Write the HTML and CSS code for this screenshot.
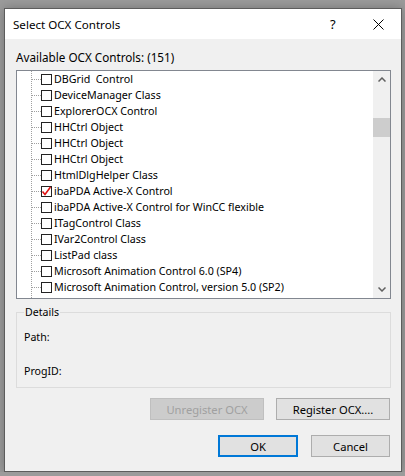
FILE: index.html
```html
<!DOCTYPE html>
<html lang="en">

<head>
  <meta charset="UTF-8">
  <title>Select OCX Controls</title>
  <link rel="stylesheet" href="styles.css">
</head>

<body>
  <div class="dialog">
    <div class="titlebar">
      <span class="title">Select OCX Controls</span>
      <span class="help">?</span>
      <span class="close">
        <svg width="11" height="11" viewBox="0 0 11 11">
          <path d="M0.5 0.5 L10.5 10.5 M10.5 0.5 L0.5 10.5" stroke="#000" stroke-width="1" fill="none" />
        </svg>
      </span>
    </div>

    <div class="content">
      <div class="caption">Available OCX Controls: (151)</div>

      <div class="listbox">
        <ul class="tree">
          <li><span class="branch"></span><span class="check"></span>DBGrid&nbsp; Control</li>
          <li><span class="branch"></span><span class="check"></span>DeviceManager Class</li>
          <li><span class="branch"></span><span class="check"></span>ExplorerOCX Control</li>
          <li><span class="branch"></span><span class="check"></span>HHCtrl Object</li>
          <li><span class="branch"></span><span class="check"></span>HHCtrl Object</li>
          <li><span class="branch"></span><span class="check"></span>HHCtrl Object</li>
          <li><span class="branch"></span><span class="check"></span>HtmlDlgHelper Class</li>
          <li><span class="branch"></span><span class="check checked">
              <svg width="11" height="11" viewBox="0 0 11 11">
                <path d="M1.5 5.5 L4 8.5 L9.5 1" stroke="#e01010" stroke-width="1.6" fill="none" />
              </svg></span>ibaPDA Active-X Control</li>
          <li><span class="branch"></span><span class="check"></span>ibaPDA Active-X Control for WinCC flexible</li>
          <li><span class="branch"></span><span class="check"></span>ITagControl Class</li>
          <li><span class="branch"></span><span class="check"></span>IVar2Control Class</li>
          <li><span class="branch"></span><span class="check"></span>ListPad class</li>
          <li><span class="branch"></span><span class="check"></span>Microsoft Animation Control 6.0 (SP4)</li>
          <li><span class="branch"></span><span class="check"></span>Microsoft Animation Control, version 5.0 (SP2)</li>
        </ul>

        <div class="scrollbar">
          <div class="arrow">
            <svg width="8" height="5" viewBox="0 0 8 5">
              <path d="M0.5 4.5 L4 1 L7.5 4.5" stroke="#606060" stroke-width="1.5" fill="none" />
            </svg>
          </div>
          <div class="track"><div class="thumb"></div></div>
          <div class="arrow">
            <svg width="8" height="5" viewBox="0 0 8 5">
              <path d="M0.5 0.5 L4 4 L7.5 0.5" stroke="#606060" stroke-width="1.5" fill="none" />
            </svg>
          </div>
        </div>
      </div>

      <fieldset class="details">
        <legend>Details</legend>
        <div class="field">Path:</div>
        <div class="field">ProgID:</div>
      </fieldset>

      <div class="button-row">
        <button class="btn btn-wide" disabled>Unregister OCX</button>
        <button class="btn btn-wide">Register OCX....</button>
      </div>

      <div class="button-row last">
        <button class="btn btn-default">OK</button>
        <button class="btn">Cancel</button>
      </div>
    </div>
  </div>
</body>

</html>
```

FILE: styles.css
```css
body {
  margin: 0;
  padding: 8px 0 0 4px;
  background: #9b9b9b;
  font-family: "Noto Sans", sans-serif;
  font-size: 12px;
  color: #000;
}

.dialog {
  width: 398px;
  box-sizing: border-box;
  border: 1px solid #5c5c5c;
  background: #f0f0f0;
  box-shadow: 0 0 10px rgba(0, 0, 0, 0.25);
}

/* title bar */
.titlebar {
  height: 30px;
  background: #fff;
  display: flex;
  align-items: center;
  padding-left: 8px;
}

.title {
  flex: 1;
  font-size: 11.6px;
}

.help {
  width: 14px;
  font-size: 13px;
  margin-right: 29px;
}

.close {
  display: flex;
  margin-right: 17px;
}

/* main area */
.content {
  padding: 10px 10px 14px 11px;
}

.caption {
  line-height: 16px;
  font-size: 11.7px;
}

.listbox {
  margin-top: 5px;
  width: 375px;
  height: 229px;
  box-sizing: border-box;
  border: 1px solid #828790;
  background: #fff;
  display: flex;
}

.tree {
  flex: 1;
  list-style: none;
  margin: 0;
  padding: 0;
  font-size: 10.7px;
  background-image: repeating-linear-gradient(to bottom, #a0a0a0 0 1px, transparent 1px 2px);
  background-size: 1px 100%;
  background-position: 14px 0;
  background-repeat: no-repeat;
  overflow: hidden;
}

.tree li {
  height: 16px;
  display: flex;
  align-items: center;
  white-space: nowrap;
}

.branch {
  width: 9px;
  height: 16px;
  margin-left: 15px;
  background-image: repeating-linear-gradient(to right, #a0a0a0 0 1px, transparent 1px 2px);
  background-size: 100% 1px;
  background-position: 0 8px;
  background-repeat: no-repeat;
}

.check {
  width: 11px;
  height: 11px;
  box-sizing: border-box;
  border: 1px solid #222;
  background: #fff;
  margin-right: 2px;
  display: flex;
}

.check svg {
  margin: -1px;
}

/* vertical scroll bar */
.scrollbar {
  width: 17px;
  background: #f0f0f0;
  display: flex;
  flex-direction: column;
}

.arrow {
  height: 17px;
  display: flex;
  align-items: center;
  justify-content: center;
}

.track {
  flex: 1;
  padding-top: 30px;
}

.thumb {
  height: 19px;
  background: #cdcdcd;
}

/* details group */
.details {
  margin: 6px 0 0;
  width: 375px;
  height: 83px;
  box-sizing: border-box;
  border: 1px solid #dcdcdc;
  padding: 0 0 0 7px;
  font-size: 10.6px;
}

.details legend {
  padding: 0 1px;
  line-height: 14px;
}

.field {
  line-height: 16px;
  margin-top: 10px;
}

.field + .field {
  margin-top: 18px;
}

/* buttons */
.button-row {
  display: flex;
  justify-content: flex-end;
  gap: 12px;
  width: 374px;
  margin-top: 10px;
}

.button-row.last {
  margin-top: 15px;
  gap: 13px;
}

.btn {
  font-family: "Noto Sans", sans-serif;
  font-size: 11.2px;
  height: 22px;
  width: 79px;
  padding: 0;
  border: 1px solid #adadad;
  background: #e1e1e1;
  color: #000;
}

.btn-wide {
  width: 114px;
}

.btn:disabled {
  background: #cccccc;
  border-color: #bfbfbf;
  color: #a0a0a0;
}

.btn-default {
  width: 80px;
  border: 2px solid #0078d7;
}
```
